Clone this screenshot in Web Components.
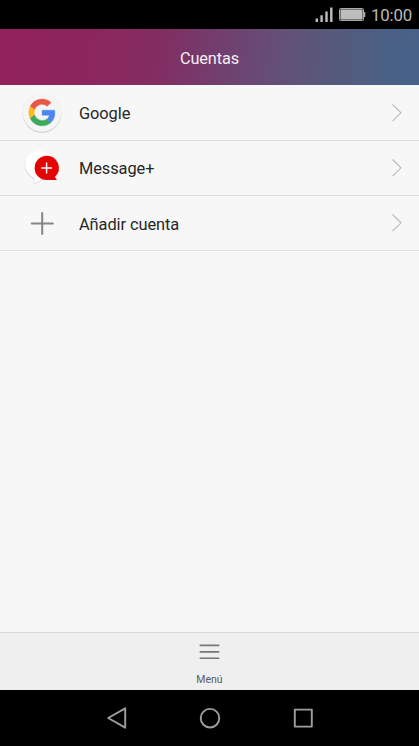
<!DOCTYPE html>
<html lang="es">
<head>
<meta charset="utf-8">
<title>Cuentas</title>
<style>
html, body { margin: 0; height: 100%; background: #000; overflow: hidden; }
body { font-family: Roboto, sans-serif; }
</style>
</head>
<body>
<accounts-screen></accounts-screen>
<script>
const define = (name, html) => {
  const template = document.createElement('template');
  template.innerHTML = html;
  customElements.define(name, class extends HTMLElement {
    constructor() {
      super();
      this.attachShadow({ mode: 'open' }).append(template.content.cloneNode(true));
    }
  });
};

define('status-bar', `
<style>
:host { display: flex; justify-content: flex-end; align-items: center; height: 29px; padding-right: 7px; box-sizing: border-box; background: #000; color: #b9b9b9; }
svg { display: block; }
.battery { margin: 0 5px 0 6px; }
time { font-size: 16.8px; line-height: 29px; padding-top: 2px; width: 41px; white-space: nowrap; letter-spacing: -.15px; }
</style>
<svg width="18" height="29" viewBox="0 0 18 29" fill="#bdbdbd"><path d="M.6 18.600h2.400V22H.6zM5.400 15.200h2.400V22H5.400zM10.300 11.400h2.400V22h-2.400zM15.100 7.500h2.400V22h-2.400z"/></svg>
<svg class="battery" width="27" height="29" viewBox="0 0 27 29"><rect x=".5" y="8.5" width="24" height="12" rx="1" fill="none" stroke="#a9a9a9"/><rect x="1.4" y="9.400" width="22.200" height="10.200" fill="#bdbdbd"/><path d="M25 12h1.300v5H25z" fill="#a9a9a9"/></svg>
<time>10:00</time>`);

define('title-bar', `
<style>
:host { display: flex; justify-content: center; align-items: center; height: 56px; padding-top: 2px; box-sizing: border-box; color: #f5eef4; font-size: 16.3px; letter-spacing: -.1px;
  background: linear-gradient(97deg, #93225c 0%, #8c265e 22%, #822d62 38%, #733d6d 51%, #644f77 66%, #555a7c 80%, #4b6085 91%, #466289 100%); }
</style>
<slot></slot>`);

define('account-row', `
<style>
:host { display: grid; grid-template-columns: 79px 1fr 27px; align-items: center; height: 55px; box-sizing: border-box; border-bottom: 1px solid #dedede; background: #f7f7f7; color: #272727; font-size: 16.4px; letter-spacing: -.08px; }
:host(:first-child) { height: 56px; }
.icon { display: flex; padding-left: 20px; }
.label { padding-top: 2px; }
:host(:nth-child(2)) .label { padding-top: 0; }
svg { display: block; }
</style>
<div class="icon"><slot name="icon"></slot></div>
<div class="label"><slot></slot></div>
<svg width="12" height="20" viewBox="0 0 12 20" fill="none" stroke="#b9b9b9" stroke-width="1.1"><path d="M.5 1.500 9 9.800.5 18.100"/></svg>`);

define('google-icon', `
<style>:host { display: block; } svg { display: block; overflow: visible; }</style>
<svg width="44" height="44" viewBox="0 0 44 44">
<circle cx="22" cy="22.700" r="19.2" fill="#c9c9c9"/><circle cx="22" cy="22" r="19.4" fill="#e1e1e1"/><circle cx="22" cy="21.500" r="19" fill="#f5f5f5"/>
<g transform="translate(8.8 8.1) scale(.555)" stroke-width=".8">
<path fill="#ea5548" stroke="#ea5548" d="M24 9.5c3.54 0 6.71 1.22 9.21 3.6l6.85-6.85C35.9 2.38 30.47 0 24 0 14.62 0 6.51 5.38 2.56 13.22l7.98 6.19C12.43 13.72 17.74 9.5 24 9.5z"/>
<path fill="#fbbd20" stroke="#fbbd20" d="M10.53 28.59c-.48-1.45-.76-2.99-.76-4.59s.27-3.14.76-4.59l-7.98-6.19C.92 16.46 0 20.12 0 24c0 3.88.92 7.54 2.56 10.78l7.97-6.19z"/>
<path fill="#3fa95b" stroke="#3fa95b" d="M24 48c6.48 0 11.93-2.13 15.89-5.81l-7.73-6c-2.15 1.45-4.92 2.3-8.16 2.3-6.26 0-11.57-4.22-13.47-9.91l-7.98 6.19C6.51 42.62 14.62 48 24 48z"/>
<path fill="#4b87ee" stroke="#4b87ee" d="M46.98 24.55c0-1.57-.15-3.09-.38-4.55H24v9.02h12.94c-.58 2.96-2.26 5.48-4.78 7.18l7.73 6c4.51-4.18 7.09-10.36 7.09-17.65z"/>
</g></svg>`);

define('message-icon', `
<style>:host { display: block; } svg { display: block; overflow: visible; }</style>
<svg width="44" height="44" viewBox="0 0 44 44">
<path transform="translate(-.5 1.100)" fill="#dcdcdc" d="M20 5C11.500 5 5.300 11 5.300 18.500c0 6 3.700 10.700 9 13.200v5.600L26 31.500 34 15C32 8.500 27 5 20 5z"/>
<path fill="#fff" d="M20 5C11.500 5 5.300 11 5.300 18.500c0 6 3.700 10.700 9 13.200v5.600L26 31.500 34 15C32 8.500 27 5 20 5z"/>
<path fill="#e30505" d="M26.800 9.700A12.200 12.200 0 1 0 26.800 34.100h9.800v-.9L34.800 31A12.200 12.200 0 0 0 26.800 9.700z"/>
<path d="M21.200 22h10.800M26.600 16.600v10.800" stroke="#fff" stroke-width="1.400"/>
</svg>`);

define('plus-icon', `
<style>:host { display: block; } svg { display: block; }</style>
<svg width="44" height="44" viewBox="0 0 44 44" fill="none" stroke="#858585" stroke-width="2" stroke-linecap="round"><path d="M11.800 22.500h21M22.200 12v21"/></svg>`);

define('menu-bar', `
<style>
:host { display: flex; flex-direction: column; align-items: center; height: 58px; box-sizing: border-box; border-top: 1px solid #d9d9d9; background: #efefef; color: #5c5c5c; font-size: 10.500px; line-height: 13px; }
svg { display: block; margin: 10px 0 12px; }
</style>
<svg width="21" height="18" viewBox="0 0 21 18" stroke="#777" stroke-width="1.600" stroke-linecap="round"><path d="M1.300 2.400h18.400M1.300 8.900h18.400M1.300 15.300h18.400"/></svg>
<slot></slot>`);

define('navigation-bar', `
<style>
:host { display: flex; justify-content: center; align-items: center; gap: 71px; height: 56px; background: #000; }
svg { display: block; fill: none; stroke: #9e9e9e; stroke-width: 1.900; stroke-linejoin: round; }
</style>
<svg width="22" height="24" viewBox="0 0 22 24"><path d="M19.200 2.300v19.400L2.200 12z"/></svg>
<svg width="22" height="24" viewBox="0 0 22 24"><circle cx="11" cy="12.200" r="9.300"/></svg>
<svg width="22" height="24" viewBox="0 0 22 24"><path d="M2.800 3.600h17v17h-17z"/></svg>`);

define('accounts-screen', `
<style>
:host { display: flex; flex-direction: column; width: 419px; height: 746px; background: #f7f7f7; }
main { flex: 1; min-height: 0; }
</style>
<status-bar></status-bar>
<title-bar>Cuentas</title-bar>
<main>
<account-row><google-icon slot="icon"></google-icon>Google</account-row>
<account-row><message-icon slot="icon"></message-icon>Message+</account-row>
<account-row><plus-icon slot="icon"></plus-icon>Añadir cuenta</account-row>
</main>
<menu-bar>Menú</menu-bar>
<navigation-bar></navigation-bar>`);
</script>
</body>
</html>
